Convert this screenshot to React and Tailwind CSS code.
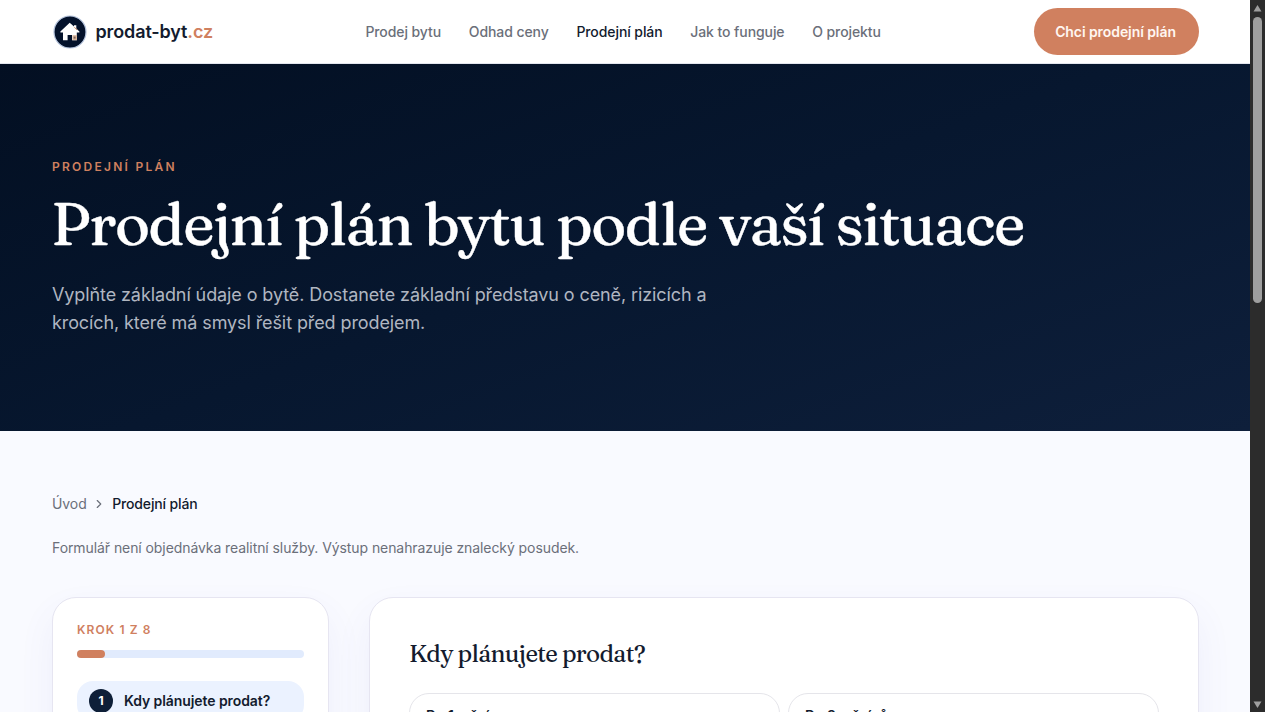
import React from "react";
import { ChevronRight } from "lucide-react";

const navItems = [
  { label: "Prodej bytu" },
  { label: "Odhad ceny" },
  { label: "Prodejní plán", active: true },
  { label: "Jak to funguje" },
  { label: "O projektu" },
];

const options = ["Do 1 měsíce", "Do 3 měsíců"];

const Logo = () => (
  <svg width="36" height="36" viewBox="0 0 36 36" fill="none">
    <circle cx="18" cy="18" r="16" fill="#04122b" stroke="#b4c3dc" strokeWidth="1.2" />
    <path
      d="M17.7 8.8 L8.4 17.4 V18.6 H11 V26.2 H15.6 V21 H20 V26.2 H24.8 V18.6 H27.4 V17.4 L24.3 14.5 V11.2 H22 V12.6 Z"
      fill="#fff"
    />
    <path d="M20.4 21.2 H25 V26.2 H20.4 Z" fill="#d9b79c" />
    <path d="M21.6 22.6 H23.6 V24.6 H21.6 Z" fill="#7d6660" />
    <path d="M22.4 13.2 L25.2 16" stroke="#c98b69" strokeWidth="1" />
  </svg>
);

const Header = () => (
  <header className="h-16 shrink-0 bg-white border-b border-[#e3e6ee] pl-[52px] pr-[51px] flex items-center justify-between">
    <div className="w-[313px] flex items-center gap-[7.5px]">
      <Logo />
      <span className="text-[18px] font-semibold tracking-[-0.007em] text-[#131b2e] whitespace-nowrap">
        prodat-byt<span className="text-[#d0805f]">.cz</span>
      </span>
    </div>
    <nav className="flex-1 flex items-center gap-[27.7px] pl-[0.4px] text-sm font-medium text-[#6b6f7a] whitespace-nowrap">
      {navItems.map((item) => (
        <a key={item.label} className={item.active ? "text-[#131b2e]" : ""}>
          {item.label}
        </a>
      ))}
    </nav>
    <button className="h-[47px] w-[165px] pr-0.5 rounded-full bg-[#d0805f] text-sm font-semibold text-[#fff6f1] whitespace-nowrap">
      Chci prodejní plán
    </button>
  </header>
);

const Hero = () => (
  <section className="h-[367px] shrink-0 px-[52px] pt-[94px] bg-linear-160 from-[#030f22] via-[#07172f] to-[#0e1f3b]">
    <p className="text-[12px] leading-[18px] font-semibold tracking-[2.25px] text-[#d0805f]">
      PRODEJNÍ PLÁN
    </p>
    <h1 className="mt-4 -ml-px font-['Fraunces',serif] text-[59.8px] leading-[64px] font-medium tracking-[-0.0258em] text-white whitespace-nowrap [-webkit-text-stroke:0.4px_#fff]">
      Prodejní plán bytu podle vaší situace
    </h1>
    <p className="mt-[25px] text-[18px] leading-[28px] tracking-[-0.0055em] text-[#b0b6c1] whitespace-nowrap">
      Vyplňte základní údaje o bytě. Dostanete základní představu o ceně, rizicích a
      <br />
      krocích, které má smysl řešit před prodejem.
    </p>
  </section>
);

const StepsCard = () => (
  <aside className="w-[277px] h-[560px] shrink-0 rounded-3xl border border-[#e6e5f1] bg-white px-6 pt-[23px] shadow-[0_16px_36px_rgba(90,80,200,0.07)]">
    <p className="text-[12px] leading-[18px] font-semibold tracking-[1.1px] text-[#d0805f]">
      KROK 1 Z 8
    </p>
    <div className="mt-[11px] h-2 rounded-full bg-[#e1ebfd]">
      <div className="h-2 w-1/8 rounded-full bg-[#d0805f]" />
    </div>
    <div className="mt-[23px] h-10 rounded-2xl bg-[#ebf2ff] px-3 flex items-center gap-[11px]">
      <span className="size-6 rounded-full bg-[#0e1f38] text-white text-[12px] font-bold flex items-center justify-center">
        1
      </span>
      <span className="text-sm font-semibold text-[#131b2e] whitespace-nowrap">
        Kdy plánujete prodat?
      </span>
    </div>
  </aside>
);

const QuestionCard = () => (
  <div className="flex-1 h-[560px] rounded-3xl border border-[#e6e5f1] bg-white px-[39px] pt-[39px] shadow-[0_16px_36px_rgba(90,80,200,0.07)]">
    <h2 className="font-['Fraunces',serif] text-2xl leading-[34px] tracking-[-0.029em] text-[#131b2e] whitespace-nowrap">
      Kdy plánujete prodat?
    </h2>
    <div className="mt-[22px] grid grid-cols-2 gap-2">
      {options.map((option) => (
        <div
          key={option}
          className="h-14 rounded-[20px] border border-[#e5e5ea] px-4 pt-[11px] text-sm leading-[22px] font-semibold text-[#131b2e]"
        >
          {option}
        </div>
      ))}
    </div>
  </div>
);

const Scrollbar = () => (
  <div className="w-[15px] h-full shrink-0 bg-[#2c2c2c] flex flex-col items-center">
    <svg width="15" height="17" viewBox="0 0 15 17">
      <path d="M7.5 5 L11.5 11.5 H3.5 Z" fill="#9f9f9f" />
    </svg>
    <div className="h-[286px] w-[9px] rounded-full bg-[#9f9f9f]" />
    <svg className="mt-auto" width="15" height="17" viewBox="0 0 15 17">
      <path d="M7.5 13 L11.5 6.5 H3.5 Z" fill="#9f9f9f" />
    </svg>
  </div>
);

const App = () => {
  return (
    <div className="w-[1265px] h-[712px] overflow-hidden flex font-['Inter',sans-serif] tracking-[-0.005em]">
      <div className="flex-1 min-w-0 h-full overflow-hidden flex flex-col bg-[#f9faff]">
        <Header />
        <Hero />
        <main className="pl-[52px] pr-[51px] pt-[62px]">
          <div className="flex items-center text-sm leading-[22px] text-[#6b6f7a]">
            <span>Úvod</span>
            <ChevronRight className="size-3.5 ml-[5px] mr-[6.5px]" strokeWidth={2} />
            <span className="font-medium tracking-[-0.01em] text-[#131b2e]">Prodejní plán</span>
          </div>
          <p className="mt-[22px] text-sm leading-[22px] text-[#6b6f7a]">
            Formulář není objednávka realitní služby. Výstup nenahrazuje znalecký posudek.
          </p>
          <div className="mt-[38px] flex items-start gap-10">
            <StepsCard />
            <QuestionCard />
          </div>
        </main>
      </div>
      <Scrollbar />
    </div>
  );
};

export default App;
